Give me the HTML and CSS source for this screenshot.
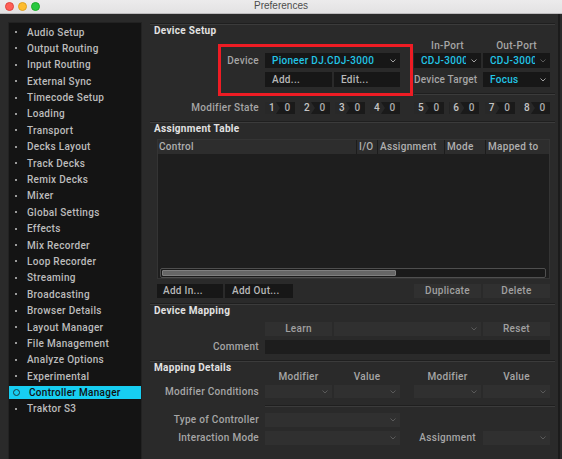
FILE: index.html
```html
<!DOCTYPE html>
<html lang="en">
<head>
  <meta charset="UTF-8" />
  <title>Preferences</title>
  <link rel="stylesheet" href="styles.css">
</head>
<body>
  <div class="titlebar">
    <div class="lights">
      <span class="light red"></span>
      <span class="light yellow"></span>
      <span class="light green"></span>
    </div>
    <div class="title">Preferences</div>
    <div></div>
  </div>

  <div class="window">
    <ul class="sidebar">
      <li>Audio Setup</li>
      <li>Output Routing</li>
      <li>Input Routing</li>
      <li>External Sync</li>
      <li>Timecode Setup</li>
      <li>Loading</li>
      <li>Transport</li>
      <li>Decks Layout</li>
      <li>Track Decks</li>
      <li>Remix Decks</li>
      <li>Mixer</li>
      <li>Global Settings</li>
      <li>Effects</li>
      <li>Mix Recorder</li>
      <li>Loop Recorder</li>
      <li>Streaming</li>
      <li>Broadcasting</li>
      <li>Browser Details</li>
      <li>Layout Manager</li>
      <li>File Management</li>
      <li>Analyze Options</li>
      <li>Experimental</li>
      <li class="active">Controller Manager</li>
      <li>Traktor S3</li>
    </ul>

    <div class="main">
      <!-- Device Setup -->
      <div class="sep"></div>
      <h2>Device Setup</h2>
      <div class="row heads">
        <span class="c3 center">In-Port</span>
        <span class="c4 center">Out-Port</span>
      </div>
      <div class="row tall first">
        <span class="lbl">Device</span>
        <div class="dd dark c12">
          <span class="val cyan">Pioneer DJ.CDJ-3000</span>
          <svg class="chev" width="6" height="4" viewBox="0 0 6 4"><path d="M0.5 0.5 L3 3 L5.5 0.5" /></svg>
        </div>
        <div class="dd dark c3">
          <span class="val cyan">CDJ-3000</span>
          <svg class="chev" width="6" height="4" viewBox="0 0 6 4"><path d="M0.5 0.5 L3 3 L5.5 0.5" /></svg>
        </div>
        <div class="dd dark c4">
          <span class="val cyan">CDJ-3000</span>
          <svg class="chev dim" width="6" height="4" viewBox="0 0 6 4"><path d="M0.5 0.5 L3 3 L5.5 0.5" /></svg>
        </div>
      </div>
      <div class="row tall">
        <div class="btn dark c1">Add...</div>
        <div class="btn dark c2">Edit...</div>
        <span class="c3 target">Device Target</span>
        <div class="dd dark c4">
          <span class="val cyan">Focus</span>
          <svg class="chev" width="6" height="4" viewBox="0 0 6 4"><path d="M0.5 0.5 L3 3 L5.5 0.5" /></svg>
        </div>
      </div>
      <div class="row line-row">
        <div class="sep c34 reach"></div>
      </div>
      <div class="row mods-row">
        <span class="lbl">Modifier State</span>
        <div class="mods c12">
          <span class="mod"><span class="mk">1</span><span class="mv">0</span></span>
          <span class="mod"><span class="mk">2</span><span class="mv">0</span></span>
          <span class="mod"><span class="mk">3</span><span class="mv">0</span></span>
          <span class="mod"><span class="mk">4</span><span class="mv">0</span></span>
        </div>
        <div class="mods c34">
          <span class="mod"><span class="mk">5</span><span class="mv">0</span></span>
          <span class="mod"><span class="mk">6</span><span class="mv">0</span></span>
          <span class="mod"><span class="mk">7</span><span class="mv">0</span></span>
          <span class="mod"><span class="mk">8</span><span class="mv">0</span></span>
        </div>
      </div>

      <!-- Assignment Table -->
      <div class="sep gap7"></div>
      <h2>Assignment Table</h2>
      <div class="table">
        <div class="thead">
          <span>Control</span>
          <span>I/O</span>
          <span>Assignment</span>
          <span>Mode</span>
          <span>Mapped to</span>
        </div>
        <div class="tbody"></div>
        <div class="hscroll"><div class="thumb"></div></div>
      </div>
      <div class="table-btns">
        <div class="btn dark add-in">Add In...</div>
        <div class="btn dark add-out">Add Out...</div>
        <div class="btn grey center push">Duplicate</div>
        <div class="btn grey center">Delete</div>
      </div>

      <!-- Device Mapping -->
      <div class="sep gap5"></div>
      <h2>Device Mapping</h2>
      <div class="row learn-row">
        <div class="btn grey center c1">Learn</div>
        <div class="dd grey c23">
          <span class="val"></span>
          <svg class="chev dim" width="6" height="4" viewBox="0 0 6 4"><path d="M0.5 0.5 L3 3 L5.5 0.5" /></svg>
        </div>
        <div class="btn grey center c4">Reset</div>
      </div>
      <div class="row">
        <span class="lbl">Comment</span>
        <div class="input c14"></div>
      </div>

      <!-- Mapping Details -->
      <div class="sep gap6"></div>
      <h2>Mapping Details</h2>
      <div class="row col-heads">
        <span class="c1 center">Modifier</span>
        <span class="c2 center">Value</span>
        <span class="c3 center">Modifier</span>
        <span class="c4 center">Value</span>
      </div>
      <div class="row cond-row">
        <span class="lbl">Modifier Conditions</span>
        <div class="dd grey c1"><span class="val"></span><svg class="chev dim" width="6" height="4" viewBox="0 0 6 4"><path d="M0.5 0.5 L3 3 L5.5 0.5" /></svg></div>
        <div class="dd grey c2"><span class="val"></span><svg class="chev dim" width="6" height="4" viewBox="0 0 6 4"><path d="M0.5 0.5 L3 3 L5.5 0.5" /></svg></div>
        <div class="dd grey c3"><span class="val"></span><svg class="chev dim" width="6" height="4" viewBox="0 0 6 4"><path d="M0.5 0.5 L3 3 L5.5 0.5" /></svg></div>
        <div class="dd grey c4"><span class="val"></span><svg class="chev dim" width="6" height="4" viewBox="0 0 6 4"><path d="M0.5 0.5 L3 3 L5.5 0.5" /></svg></div>
      </div>
      <div class="row line-row gap7">
        <div class="sep c14 reach"></div>
      </div>
      <div class="row type-row">
        <span class="lbl">Type of Controller</span>
        <div class="dd grey c12"><span class="val"></span><svg class="chev dim" width="6" height="4" viewBox="0 0 6 4"><path d="M0.5 0.5 L3 3 L5.5 0.5" /></svg></div>
      </div>
      <div class="row gap5">
        <span class="lbl">Interaction Mode</span>
        <div class="dd grey c12"><span class="val"></span><svg class="chev dim" width="6" height="4" viewBox="0 0 6 4"><path d="M0.5 0.5 L3 3 L5.5 0.5" /></svg></div>
        <span class="c3 right">Assignment</span>
        <div class="dd grey c4"><span class="val"></span><svg class="chev dim" width="6" height="4" viewBox="0 0 6 4"><path d="M0.5 0.5 L3 3 L5.5 0.5" /></svg></div>
      </div>
    </div>
  </div>

  <!-- red highlight drawn over the screenshot -->
  <div class="highlight"></div>
</body>
</html>
```

FILE: styles.css
```css
* {
  box-sizing: border-box;
}

body {
  margin: 0;
  width: 562px;
  height: 459px;
  overflow: hidden;
  background: #2a2a2a;
  font-family: Roboto, "Liberation Sans", sans-serif;
  font-size: 10px;
  font-weight: 500;
  letter-spacing: 0.3px;
  color: #a6a6a6;
}

/* mac title bar */
.titlebar {
  height: 14px;
  display: grid;
  grid-template-columns: 1fr auto 1fr;
  align-items: center;
  background: linear-gradient(#ecebec, #e3e2e3);
  border-bottom: 1px solid #bdbbbd;
}

.lights {
  display: flex;
  gap: 4px;
  padding-left: 5px;
  margin-top: -1px;
}

.light {
  width: 9px;
  height: 9px;
  border-radius: 50%;
}

.red { background: #fe5f57; border: 0.5px solid #e0443e; }
.yellow { background: #febc2e; border: 0.5px solid #dea123; }
.green { background: #28c840; border: 0.5px solid #1aab29; }

.title {
  font-family: "Liberation Sans", sans-serif;
  font-weight: normal;
  font-size: 10px;
  letter-spacing: 0;
  color: #4c4c4c;
  margin-top: -2px;
}

.window {
  display: flex;
  height: 445px;
}

/* left nav */
.sidebar {
  list-style: none;
  margin: 8px 0 0 8px;
  padding: 2.5px 0 0;
  width: 134px;
  background: #141414;
  border: 1px solid #222;
  border-bottom: none;
}

.sidebar li {
  display: flex;
  align-items: center;
  height: 13px;
  margin-bottom: 3.4px;
  padding-left: 6px;
  color: #bcbcbc;
  white-space: nowrap;
}

.sidebar li::before {
  content: "";
  width: 2px;
  height: 2px;
  background: #9a9a9a;
  margin-right: 10px;
}

.sidebar li.active {
  background: #17cef2;
  color: #101010;
}

.sidebar li.active::before {
  width: 5px;
  height: 5px;
  margin-left: -2px;
  margin-right: 9px;
  background: transparent;
  border: 1px solid #1c3a40;
  border-radius: 50%;
}

/* main panel */
.main {
  width: 410px;
  margin-left: 8px;
  padding: 9px 3px 0 0;
  border-right: 2px solid #1b1b1b;
}

.sep {
  height: 2px;
  border-top: 1px solid #1f1f1f;
  border-bottom: 1px solid #3b3b3b;
}

.gap5 { margin-top: 5px; }
.gap6 { margin-top: 6px; }
.gap7 { margin-top: 7px; }

h2 {
  margin: 0;
  padding-left: 4px;
  height: 12px;
  line-height: 12px;
  font-size: 10px;
  font-weight: 700;
  color: #e2e2e2;
}

.row {
  display: grid;
  grid-template-columns: 113px 67px 66px 10px 67px 67px;
  column-gap: 2px;
  height: 14px;
  margin-top: 4px;
  line-height: 14px;
}

.row.heads { height: 12px; line-height: 12px; margin-top: 3px; }
.row.tall { height: 15px; line-height: 15px; }
.row.first { margin-top: 1px; }
.row.line-row { height: 2px; margin-top: 6px; }
.row.line-row.gap7 { margin-top: 7px; }
.row.mods-row { height: 12px; line-height: 12px; margin-top: 7px; }
.row.learn-row { margin-top: 5px; }
.row.col-heads { height: 10px; line-height: 10px; margin-top: -2px; }
.row.cond-row { height: 13px; line-height: 13px; margin-top: 3px; }
.row.type-row { margin-top: 6px; }

.lbl {
  grid-column: 1;
  text-align: right;
  padding-right: 4px;
  white-space: nowrap;
}

.c1 { grid-column: 2; }
.c2 { grid-column: 3; }
.c3 { grid-column: 5; }
.c4 { grid-column: 6; }
.c12 { grid-column: 2 / 4; }
.c23 { grid-column: 3 / 6; }
.c34 { grid-column: 5 / 7; }
.c14 { grid-column: 2 / 7; }

.center { text-align: center; }
.right { text-align: right; padding-right: 5px; }
.reach { margin-right: -5px; }

.target {
  white-space: nowrap;
  letter-spacing: 0.2px;
}

/* dropdowns and buttons */
.dd {
  display: flex;
  align-items: center;
  padding: 0 4px 0 7px;
  overflow: hidden;
}

.dd .val {
  flex: 1;
  min-width: 0;
  overflow: hidden;
  white-space: nowrap;
}

.chev {
  flex: none;
  margin-left: 5px;
  fill: none;
  stroke: #a0a0a0;
  stroke-width: 1;
}

.chev.dim {
  stroke: #5a5a5a;
}

.dark { background: #171717; }
.grey { background: #303030; }

.cyan { color: #22c5e6; }

.btn {
  white-space: nowrap;
  padding-left: 7px;
  color: #b8b8b8;
}

.btn.grey { color: #a0a0a0; }
.btn.center { padding-left: 0; }

.input {
  background: #1d1d1d;
}

/* modifier state pairs */
.mods {
  display: flex;
  justify-content: space-between;
}

.mod {
  width: 30px;
  display: flex;
  background: #1a1a1a;
  color: #c4c4c4;
}

.mk {
  width: 15px;
  text-align: center;
  padding-right: 1px;
  background: #282828;
  clip-path: polygon(0 0, 11px 0, 15px 50%, 11px 100%, 0 100%);
}

.mv {
  flex: 1;
  text-align: center;
  color: #aeaeae;
}

/* assignment table */
.table {
  margin: 4px 0 0 7px;
  width: 393px;
  height: 140px;
  border: 1px solid #343434;
  background: #1e1e1e;
  display: flex;
  flex-direction: column;
}

.thead {
  display: grid;
  grid-template-columns: 198px 21px 67px 41px 1fr;
  height: 14px;
  line-height: 14px;
  background: #2d2d2d;
  color: #b0b0b0;
}

.thead span {
  padding-left: 3px;
  white-space: nowrap;
  overflow: hidden;
}

.thead span:first-child { padding-left: 1px; }

.thead span + span {
  border-left: 1px solid #1c1c1c;
  padding-left: 2px;
}

.tbody {
  flex: 1;
}

.hscroll {
  height: 10px;
  margin: 0 3px 0 2px;
  padding: 1px;
  border: 1px solid #4f4f4f;
  border-radius: 2px;
  background: #1a1a1a;
}

.thumb {
  width: 234px;
  height: 100%;
  background: #666;
  border: 1px solid #808080;
  border-radius: 1px;
}

.table-btns {
  display: flex;
  gap: 2px;
  margin: 5px 0 0 7px;
  width: 393px;
  height: 14px;
  line-height: 14px;
}

.table-btns .btn { width: 67px; }
.table-btns .add-in { width: 66px; padding-left: 6px; }
.table-btns .add-out { width: 68px; }
.table-btns .push { margin-left: auto; }

/* annotation box over the device controls */
.highlight {
  position: absolute;
  left: 218px;
  top: 44px;
  width: 195px;
  height: 52px;
  border: 3px solid #ee1c24;
}
```
